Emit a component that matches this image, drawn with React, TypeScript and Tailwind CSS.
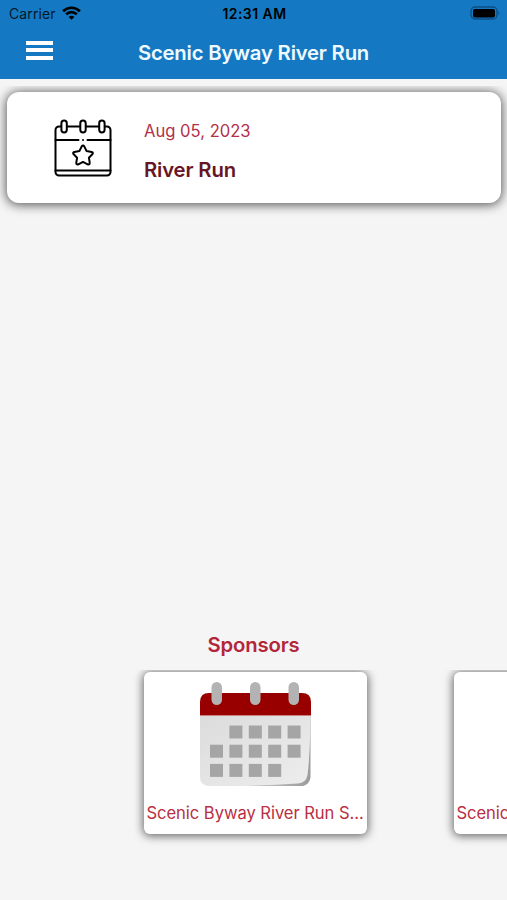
import React from 'react';

const StatusBar: React.FC = () => {
  return (
    <div className="grid grid-cols-3 items-center h-7 pl-[9px] pr-[7px] text-black">
      <div className="flex items-center gap-1.5">
        <span className="text-[14px] leading-none tracking-[0.1px] opacity-80">Carrier</span>
        <svg className="w-[19px] h-[14px] -mt-[2px]" viewBox="0 0 19 14" fill="none" stroke="currentColor" strokeWidth="2.7">
          <path d="M1.1 5.2C5.9 0.6 13.1 0.6 17.9 5.2" />
          <path d="M4.2 8.3C7.2 5.4 11.8 5.4 14.8 8.3" />
          <path d="M9.5 13.8L6.6 10.9C8.2 9.3 10.8 9.3 12.4 10.9Z" fill="currentColor" stroke="none" />
        </svg>
      </div>
      <span className="text-center text-[14px] leading-none tracking-[0.45px] font-semibold whitespace-nowrap">12:31 AM</span>
      <svg className="w-[30px] h-[14px] -mt-[2px] justify-self-end" viewBox="0 0 30 14">
        <rect x="1" y="1" width="26" height="12" rx="4" fill="none" stroke="#0d4f85" strokeWidth="1.3" />
        <rect x="3" y="3" width="22" height="8.5" rx="2" fill="#000" />
        <path d="M28.5 5v4c1.2-.6 1.2-3.4 0-4z" fill="#0d4f85" />
      </svg>
    </div>
  );
};

const Header: React.FC = () => {
  return (
    <header className="h-[79px] bg-[#1479c2]">
      <StatusBar />
      <div className="grid grid-cols-[60px_1fr_60px] items-center h-12">
        <button className="ml-[26px] -mt-1 w-[27px] h-[19px] flex flex-col justify-between" aria-label="Menu">
          <span className="block w-full h-1 bg-white"></span>
          <span className="block w-full h-1 bg-white"></span>
          <span className="block w-full h-1 bg-white"></span>
        </button>
        <h1 className="pt-px text-center text-[20.3px] leading-6 tracking-[-0.2px] font-semibold text-[#eefaff] whitespace-nowrap">
          Scenic Byway River Run
        </h1>
      </div>
    </header>
  );
};

const EventIcon: React.FC = () => {
  return (
    <svg className="w-[58px] h-[58px]" viewBox="0 0 58 58" fill="none" stroke="#000" strokeWidth="2" strokeLinecap="round" strokeLinejoin="round">
      <path d="M7 7.5H5a3.5 3.5 0 0 0-3.5 3.5v42a3.5 3.5 0 0 0 3.5 3.5h48a3.5 3.5 0 0 0 3.5-3.5V11A3.5 3.5 0 0 0 53 7.5h-2M13 7.5h12.5M32 7.5h12.5" />
      <rect x="7.4" y="1.5" width="5.4" height="12" rx="2.7" />
      <rect x="26.3" y="1.5" width="5.4" height="12" rx="2.7" />
      <rect x="45.2" y="1.5" width="5.4" height="12" rx="2.7" />
      <path d="M1.5 21H24.5M29 21h.01M33.5 21h23M1.5 51.5h55" />
      <path d="M27.6 27.6Q29 25.6 30.4 27.6L32.6 32.1 37.6 32.9Q39.7 33.5 38.3 35.3L34.9 38.7 35.7 43.7Q35.8 46 33.6 45.3L29 42.9 24.4 45.3Q22.2 46 22.3 43.7L23.1 38.7 19.7 35.3Q18.3 33.5 20.4 32.9L25.4 32.1Z" />
    </svg>
  );
};

const days = [
  [1, 0], [2, 0], [3, 0], [4, 0],
  [0, 1], [1, 1], [2, 1], [3, 1], [4, 1],
  [0, 2], [1, 2], [2, 2], [3, 2],
];

const SponsorLogo: React.FC = () => {
  return (
    <svg className="w-[111px] h-[105px]" viewBox="0 0 111 105">
      <defs>
        <linearGradient id="page" x1="0" y1="0" x2="1" y2="1">
          <stop offset="0" stopColor="#dcdcdc" />
          <stop offset="1" stopColor="#ededed" />
        </linearGradient>
        <linearGradient id="fold" x1="0" y1="0" x2="1" y2="0">
          <stop offset="0" stopColor="#dedede" />
          <stop offset="1" stopColor="#9c9c9c" />
        </linearGradient>
      </defs>
      <path d="M20 100H98Q108 96 109 34H110.5V95Q110 102 103 104H50Z" fill="url(#fold)" />
      <path d="M0 34H110.5Q110 75 107.5 93Q106 101 98 101.5Q70 103 44 104H8Q0 103 0 95Z" fill="url(#page)" />
      <path d="M0 33.5V20Q0 11 9 11H102Q111 11 111 20V33.5Z" fill="#980000" />
      <rect x="11.5" y="0" width="10.5" height="23" rx="5.25" fill="#b3b3b3" />
      <rect x="50" y="0" width="10.5" height="23" rx="5.25" fill="#b3b3b3" />
      <rect x="88.5" y="0" width="10.5" height="23" rx="5.25" fill="#b3b3b3" />
      {days.map(([col, row]) => (
        <rect key={`${col}-${row}`} x={10 + col * 19.4} y={43.5 + row * 19.2} width="13" height="13" fill="#a5a5a5" />
      ))}
    </svg>
  );
};

const SponsorCard: React.FC<{ name: string; logo?: boolean }> = ({ name, logo }) => {
  return (
    <div className="shrink-0 w-[223px] h-[162px] pt-2.5 flex flex-col items-center bg-white rounded-[6px] shadow-[0_1px_10px_1px_rgba(0,0,0,0.6)]">
      <div className="h-[105px]">{logo && <SponsorLogo />}</div>
      <p className="w-full mt-4 pl-[2.5px] text-[16.6px] leading-5 tracking-[-0.06px] text-[#b92f43] whitespace-nowrap">{name}</p>
    </div>
  );
};

const App: React.FC = () => {
  return (
    <div className="w-[507px] h-[900px] flex flex-col overflow-hidden bg-[#f5f5f5] font-['Inter',sans-serif]">
      <Header />

      <main className="flex-1 flex flex-col">
        <div className="mt-[7px] pl-[7px] pr-[6px] pt-[6px] pb-4 overflow-hidden">
          <div className="h-[111px] flex items-center pl-[47px] bg-white rounded-[12px] shadow-[0_1px_11px_1px_rgba(0,0,0,0.65)]">
            <EventIcon />
            <div className="ml-8 pt-[7px]">
              <p className="text-[16.6px] leading-5 text-[#b23049]">Aug 05, 2023</p>
              <h2 className="mt-[17px] text-[20.3px] leading-6 tracking-[-0.15px] font-semibold text-[#681525]">River Run</h2>
            </div>
          </div>
        </div>

        <section className="mt-auto mb-11">
          <h3 className="text-center text-[20.3px] leading-6 tracking-[-0.15px] font-semibold text-[#b3263a]">Sponsors</h3>
          <div className="flex gap-[87px] mt-[13px] pt-[2px] pb-[22px] pl-36 overflow-hidden">
            <SponsorCard name="Scenic Byway River Run S..." logo />
            <SponsorCard name="Scenic Byway River Run S..." />
          </div>
        </section>
      </main>
    </div>
  );
};

export default App;
